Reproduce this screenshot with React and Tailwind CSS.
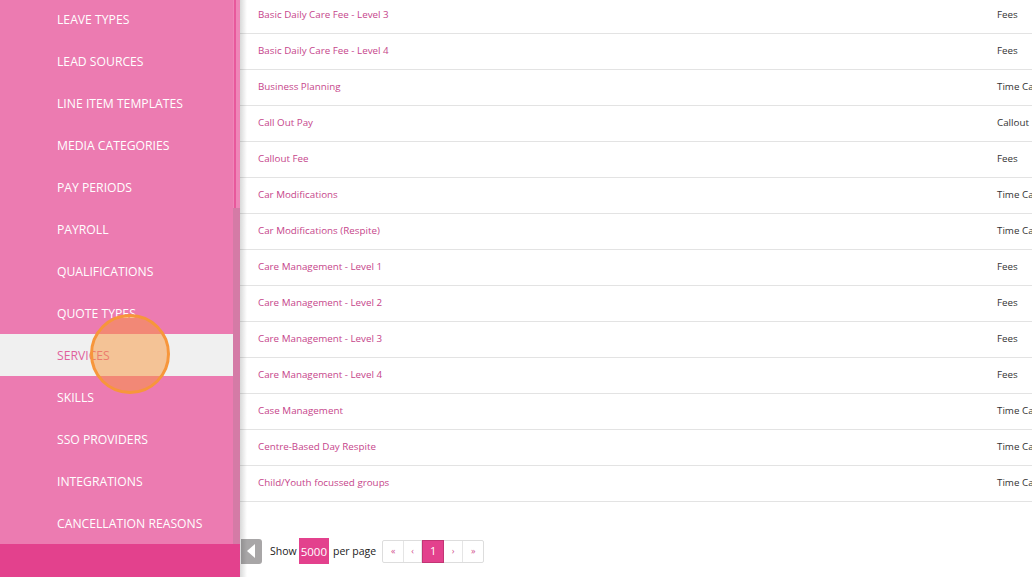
import React from 'react';

const menu = [
  'LEAVE TYPES',
  'LEAD SOURCES',
  'LINE ITEM TEMPLATES',
  'MEDIA CATEGORIES',
  'PAY PERIODS',
  'PAYROLL',
  'QUALIFICATIONS',
  'QUOTE TYPES',
  'SERVICES',
  'SKILLS',
  'SSO PROVIDERS',
  'INTEGRATIONS',
  'CANCELLATION REASONS',
];

const rows = [
  ['Basic Daily Care Fee - Level 3', 'Fees'],
  ['Basic Daily Care Fee - Level 4', 'Fees'],
  ['Business Planning', 'Time Ca'],
  ['Call Out Pay', 'Callout'],
  ['Callout Fee', 'Fees'],
  ['Car Modifications', 'Time Ca'],
  ['Car Modifications (Respite)', 'Time Ca'],
  ['Care Management - Level 1', 'Fees'],
  ['Care Management - Level 2', 'Fees'],
  ['Care Management - Level 3', 'Fees'],
  ['Care Management - Level 4', 'Fees'],
  ['Case Management', 'Time Ca'],
  ['Centre-Based Day Respite', 'Time Ca'],
  ['Child/Youth focussed groups', 'Time Ca'],
];

const Sidebar = () => (
  <aside className="w-[240px] h-full flex flex-col shrink-0 relative z-10">
    <div className="flex flex-1 min-h-0 bg-[#ec7bb1]">
      <ul className="w-[233px] -mt-[2px]">
        {menu.map((m) => (
          <li
            key={m}
            className={`h-[42px] flex items-center pl-[57px] pt-[2px] text-[12.2px] ${
              m === 'SERVICES' ? 'bg-[#f0f0f0] text-[#e0609c]' : 'text-white'
            }`}
          >
            {m}
          </li>
        ))}
      </ul>
      <div className="w-[7px] flex flex-col bg-[#ef86b8]">
        <div className="h-[208px] border-l-2 border-[#e8589c] ml-[1px]" />
        <div className="flex-1 bg-[#d47ba6]" />
      </div>
    </div>
    <div className="h-[33px] bg-[#e3418d]" />
    <div className="absolute left-[90px] top-[314px] w-[80px] h-[80px] rounded-full border-[3px] border-[#f7963b] bg-[#f7963b]/50" />
  </aside>
);

const Pager = () => (
  <div className="flex ml-[6px] h-[23px] border border-[#dddddd] rounded-[2px] text-[9px] text-[#d2508f]">
    <span className="w-[21px] flex items-center justify-center border-r border-[#e5e5e5]">«</span>
    <span className="w-[18px] flex items-center justify-center border-r border-[#e5e5e5]">‹</span>
    <span className="w-[22px] flex items-center justify-center bg-[#e3418d] text-white text-[11px] border border-[#c23574] -my-px">1</span>
    <span className="w-[19px] flex items-center justify-center border-r border-[#e5e5e5]">›</span>
    <span className="w-[20px] flex items-center justify-center">»</span>
  </div>
);

export default function App() {
  return (
    <div className="w-[1032px] h-[577px] flex overflow-hidden bg-white" style={{ fontFamily: '"Open Sans", sans-serif' }}>
      <Sidebar />
      <main className="flex-1 relative">
        <div className="absolute left-0 top-0 bottom-0 w-[7px] bg-gradient-to-r from-black/15 to-transparent" />
        <div className="-mt-[2px]">
          {rows.map(([name, type]) => (
            <div key={name} className="h-[36px] flex items-center border-b border-[#e3e3e3] text-[9.8px]">
              <div className="w-[757px] pl-[18px] text-[#c6458b]">{name}</div>
              <div className="text-[#333333] whitespace-nowrap">{type}</div>
            </div>
          ))}
        </div>
        <div className="flex items-center mt-[36px] h-[26px] text-[10.5px] text-[#222222]">
          <div className="w-[21px] h-[25px] ml-[1px] bg-[#a8a6a7] rounded-r-[3px] flex items-center justify-center">
            <svg width="9" height="14" viewBox="0 0 9 14">
              <path d="M8 0 L0 7 L8 14 Z" fill="#ffffff" />
            </svg>
          </div>
          <span className="ml-[8px] pt-[2px]">Show</span>
          <span className="ml-[2px] h-[26px] px-[2px] bg-[#e3418d] text-white text-[11.5px] flex items-center pt-[1px]">5000</span>
          <span className="ml-[4px] pt-[2px]">per page</span>
          <Pager />
        </div>
      </main>
    </div>
  );
}
